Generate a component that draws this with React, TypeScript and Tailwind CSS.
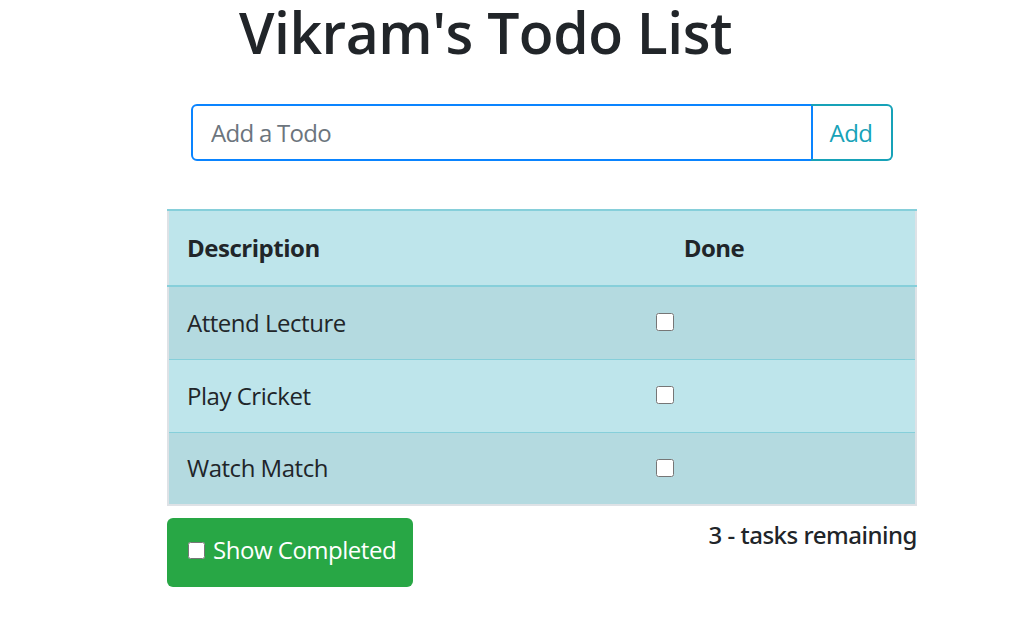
const TODOS = [
  { id: 1, text: 'Attend Lecture', done: false },
  { id: 2, text: 'Play Cricket', done: false },
  { id: 3, text: 'Watch Match', done: false },
];

export default function App() {
  const remaining = TODOS.filter((t) => !t.done).length;

  return (
    <div className="min-h-screen bg-white text-[#212529] tracking-[-0.03em] font-['Open_Sans',sans-serif]">
      {/* Title */}
      <div className="w-[971px] text-center">
        <h1 className="text-[57px] leading-[64px] font-semibold">Vikram's Todo List</h1>
      </div>

      {/* Add row */}
      <div className="ml-[191px] mt-[40px] flex w-[702px] h-[57px]">
        <input
          placeholder="Add a Todo"
          className="flex-1 h-full rounded-l-[6px] border-2 border-[#0a84ff] px-[18px] text-[24px] tracking-[-0.03em] text-[#495057] placeholder:text-[#6c757d] outline-none"
        />
        <button className="w-[82px] h-full -ml-[2px] rounded-r-[6px] border-2 border-l-0 border-[#17a2b8] text-[24px] text-[#17a2b8]">
          Add
        </button>
      </div>

      {/* Table */}
      <div className="ml-[167px] mt-[48px] w-[750px]">
        <table className="w-full border-collapse border-x-2 border-b-2 border-[#dee2e6] text-[24px]">
          <thead>
            <tr className="bg-[#bee5eb]">
              <th className="w-[345px] h-[76px] border-t-2 border-b-2 border-[#86cfda] pl-[18px] text-left font-bold">
                Description
              </th>
              <th className="h-[76px] border-t-2 border-b-2 border-[#86cfda] text-center font-bold">Done</th>
            </tr>
          </thead>
          <tbody>
            {TODOS.map((t, i) => (
              <tr key={t.id} className={i % 2 === 0 ? 'bg-[#b4dae0]' : 'bg-[#bee5eb]'}>
                <td className={`h-[73px] pl-[18px] ${i > 0 ? 'border-t border-[#86cfda]' : ''}`}>{t.text}</td>
                <td className={`h-[73px] pl-[143px] ${i > 0 ? 'border-t border-[#86cfda]' : ''}`}>
                  <input type="checkbox" defaultChecked={t.done} className="w-[18px] h-[18px] align-middle -mt-[6px]" />
                </td>
              </tr>
            ))}
          </tbody>
        </table>

        <div className="mt-[12px] flex items-start justify-between">
          <button className="flex items-center gap-[8px] w-[246px] h-[69px] rounded-[6px] bg-[#28a745] pl-[21px] pb-[6px] text-[24px] text-white">
            <input type="checkbox" className="w-[17px] h-[17px] mt-[2px]" />
            Show Completed
          </button>
          <div className="-mt-[1px] text-[24px] font-['Noto_Sans',sans-serif] font-medium leading-[36px] tracking-[-0.02em]">
            {remaining} - tasks remaining
          </div>
        </div>
      </div>
    </div>
  );
}
